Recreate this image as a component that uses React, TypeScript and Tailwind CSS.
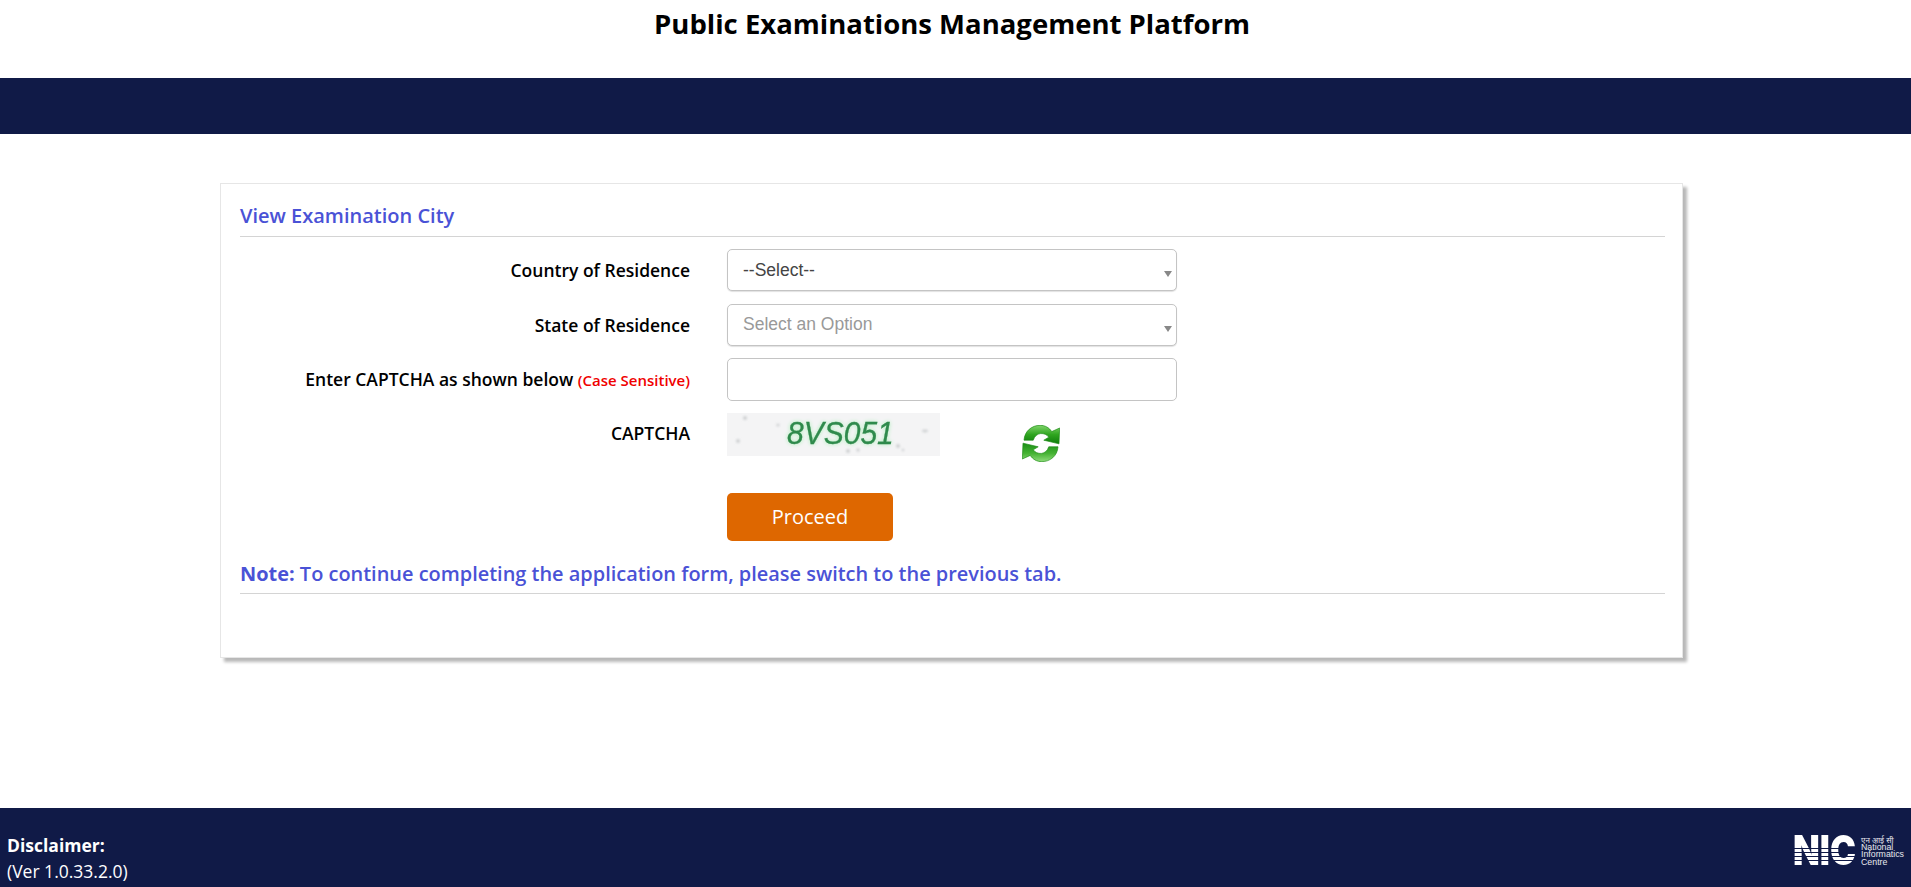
import React from "react";

const font = "font-['Open_Sans',sans-serif]";

function Refresh() {
  const arrow =
    "M6 46 C8 18 30 1 55 1 C70 1 82 8 90 20 L114 9 L112 57 L66 46 L81 37 C76 29 66 25 56 26 C46 27 38 34 34 46 Z";
  return (
    <svg viewBox="0 0 115 112" className="w-[38px] h-[37px]">
      <defs>
        <linearGradient id="rg1" x1="0" y1="0" x2="0" y2="1">
          <stop offset="0" stopColor="#7fd46a" />
          <stop offset="0.5" stopColor="#2fa51f" />
          <stop offset="1" stopColor="#0f7d0c" />
        </linearGradient>
        <linearGradient id="rg2" x1="0" y1="1" x2="0" y2="0">
          <stop offset="0" stopColor="#1b8f16" />
          <stop offset="0.55" stopColor="#45b233" />
          <stop offset="1" stopColor="#8fdc7a" />
        </linearGradient>
      </defs>
      <path d={arrow} fill="url(#rg1)" stroke="#1c8a14" strokeWidth="2" />
      <path d={arrow} fill="url(#rg2)" stroke="#1c8a14" strokeWidth="2" transform="rotate(180 57.5 56)" />
    </svg>
  );
}

function Captcha() {
  return (
    <div className="relative w-[213px] h-[43px] bg-[#f4f4f5] overflow-hidden pl-[60px] pt-[3px]">
      <svg viewBox="0 0 213 43" className="absolute inset-0 w-full h-full blur-[0.8px]">
        <g fill="#d0d2d4">
          <circle cx="18" cy="5" r="2" />
          <circle cx="11" cy="28" r="2" />
          <circle cx="51" cy="12" r="1.6" />
          <ellipse cx="198" cy="18" rx="3" ry="1.4" />
          <circle cx="121" cy="38" r="2" />
          <circle cx="131" cy="37" r="1.7" />
          <circle cx="171" cy="33" r="2" />
          <circle cx="176" cy="37" r="1.3" />
        </g>
      </svg>
      <span className="relative inline-block font-['Liberation_Sans',sans-serif] italic text-[30px] leading-[32px] origin-top scale-y-[1.06] text-[#2f8a4c] [-webkit-text-stroke:0.3px_#2f8a4c] [text-shadow:0_0_4px_#9dedab] blur-[0.4px]">
        8VS051
      </span>
    </div>
  );
}

function Row({ label, children, className = "" }: { label: React.ReactNode; children: React.ReactNode; className?: string }) {
  return (
    <div className={`flex ${className}`}>
      <div className="w-[450px] shrink-0 text-right text-[17.5px] font-semibold text-black leading-[42px]">{label}</div>
      <div className="ml-[37px] flex items-start">{children}</div>
    </div>
  );
}

function Select({ text, muted }: { text: string; muted?: boolean }) {
  return (
    <div className={`relative w-[450px] h-[42px] rounded-[5px] border border-[#c4c4c4] bg-white shadow-[0_1px_1px_rgba(0,0,0,0.12)] flex items-center pl-[15px] ${muted ? "pb-[1px]" : ""}`}>
      <span className={`font-['Liberation_Sans',sans-serif] text-[17.5px] ${muted ? "text-[#999999]" : "text-[#444444]"}`}>{text}</span>
      <span className="absolute right-[4px] top-[21px] w-0 h-0 border-x-[4px] border-x-transparent border-t-[6px] border-t-[#888888]" />
    </div>
  );
}

export default function App() {
  return (
    <div className={`${font} min-h-screen flex flex-col bg-white`}>
      <header className="h-[78px] pt-[5px] pr-[7px] text-center">
        <h1 className="text-[27.5px] leading-[38px] font-bold text-black">Public Examinations Management Platform</h1>
      </header>
      <div className="h-[56px] bg-[#101a47]" />

      <main className="flex-1 pl-[220px] pr-[228px] pt-[49px]">
        <section className="h-[475px] border border-[#e6e6e6] bg-white shadow-[4px_4px_3px_#b8b8b8] pl-[19px] pr-[17px] pt-[17px]">
          <h2 className="h-[36px] border-b border-[#d4d4d4] text-[20px] leading-[30px] font-semibold text-[#4a52d6]">View Examination City</h2>

          <Row label="Country of Residence" className="mt-[12px]">
            <Select text="--Select--" />
          </Row>
          <Row label="State of Residence" className="mt-[13px]">
            <Select text="Select an Option" muted />
          </Row>
          <Row label={<>Enter CAPTCHA as shown below <span className="text-[15px] text-[#f00000]">(Case Sensitive)</span></>} className="mt-[12px]">
            <input aria-label="CAPTCHA" className="w-[450px] h-[43px] rounded-[5px] border border-[#c4c4c4] bg-white outline-none" />
          </Row>
          <Row label={<span className="block -mt-[1px]">CAPTCHA</span>} className="mt-[12px]">
            <Captcha />
            <div className="ml-[82px] mt-[12px]">
              <Refresh />
            </div>
          </Row>
          <div className="ml-[487px] mt-[31px]">
            <button className="w-[166px] h-[48px] rounded-[5px] bg-[#de6700] text-white text-[20px] font-normal">Proceed</button>
          </div>
          <p className="mt-[16px] h-[37px] border-b border-[#d4d4d4] text-[19.95px] leading-[34px] font-semibold text-[#4a52d6]">
            <span className="font-bold">Note:</span> To continue completing the application form, please switch to the previous tab.
          </p>
        </section>
      </main>

      <footer className="h-[79px] bg-[#101a47] flex justify-between items-start text-white pl-[7px] pr-[6px]">
        <div className="pt-[24px] text-[17.5px] leading-[26px]">
          <div className="font-bold">Disclaimer:</div>
          <div>(Ver 1.0.33.2.0)</div>
        </div>
        <div className="flex items-start gap-[4px] pt-[27px]">
          <span className="inline-block w-[76px] -mr-[12px] origin-left scale-x-[0.85] font-['Inter',sans-serif] font-black text-[41px] leading-[30px] whitespace-nowrap text-transparent bg-clip-text bg-[linear-gradient(180deg,#ffffff_0,#ffffff_13px,#101a47_13px,#101a47_14px,#ffffff_14px,#ffffff_17px,#101a47_17px,#101a47_18px,#ffffff_18px,#ffffff_21px,#101a47_21px,#101a47_22px,#ffffff_22px,#ffffff_25px,#101a47_25px,#101a47_26px,#ffffff_26px,#ffffff_30px)]">NIC</span>
          <div className="w-[44px] font-['Liberation_Sans',sans-serif] text-[8.8px] leading-[7.6px] text-[#e8e8ee] whitespace-nowrap pt-[1px]">
            <div className="font-['Noto_Sans','DejaVu_Sans',sans-serif] text-[8px]">एन आई सी</div>
            <div>National</div>
            <div>Informatics</div>
            <div>Centre</div>
          </div>
        </div>
      </footer>
    </div>
  );
}
